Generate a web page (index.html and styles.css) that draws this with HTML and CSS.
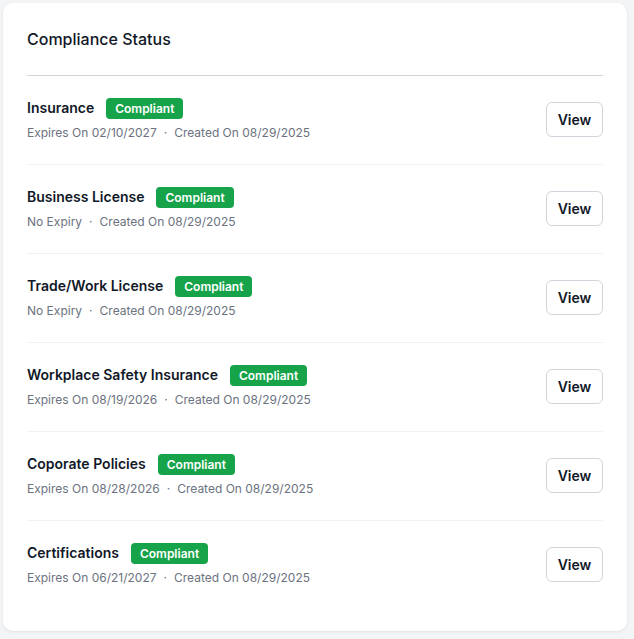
FILE: index.html
```html
<!DOCTYPE html>
<html lang="en">
<head>
    <meta charset="UTF-8">
    <title>Compliance Status</title>
    <link rel="stylesheet" href="styles.css">
</head>
<body>
    <section class="card">
        <h2 class="card-title">Compliance Status</h2>
        <div class="doc-list">
            <div class="doc-item">
                <div class="doc-info">
                    <p class="doc-name">Insurance <span class="badge">Compliant</span></p>
                    <p class="doc-meta">Expires On 02/10/2027<span class="dot">·</span>Created On 08/29/2025</p>
                </div>
                <button class="btn-view">View</button>
            </div>
            <div class="doc-item">
                <div class="doc-info">
                    <p class="doc-name">Business License <span class="badge">Compliant</span></p>
                    <p class="doc-meta">No Expiry<span class="dot">·</span>Created On 08/29/2025</p>
                </div>
                <button class="btn-view">View</button>
            </div>
            <div class="doc-item">
                <div class="doc-info">
                    <p class="doc-name">Trade/Work License <span class="badge">Compliant</span></p>
                    <p class="doc-meta">No Expiry<span class="dot">·</span>Created On 08/29/2025</p>
                </div>
                <button class="btn-view">View</button>
            </div>
            <div class="doc-item">
                <div class="doc-info">
                    <p class="doc-name">Workplace Safety Insurance <span class="badge">Compliant</span></p>
                    <p class="doc-meta">Expires On 08/19/2026<span class="dot">·</span>Created On 08/29/2025</p>
                </div>
                <button class="btn-view">View</button>
            </div>
            <div class="doc-item">
                <div class="doc-info">
                    <p class="doc-name">Coporate Policies <span class="badge">Compliant</span></p>
                    <p class="doc-meta">Expires On 08/28/2026<span class="dot">·</span>Created On 08/29/2025</p>
                </div>
                <button class="btn-view">View</button>
            </div>
            <div class="doc-item">
                <div class="doc-info">
                    <p class="doc-name">Certifications <span class="badge">Compliant</span></p>
                    <p class="doc-meta">Expires On 06/21/2027<span class="dot">·</span>Created On 08/29/2025</p>
                </div>
                <button class="btn-view">View</button>
            </div>
        </div>
    </section>
</body>
</html>
```
FILE: styles.css
```css
* {
    margin: 0;
    padding: 0;
    box-sizing: border-box;
}
body {
    padding: 3px;
    background-color: #f3f4f6;
    font-family: Inter, "Liberation Sans", sans-serif;
    color: #111827;
}
.card {
    width: 624px;
    padding: 24px 24px 22px;
    background-color: #fff;
    border-radius: 10px;
    box-shadow: 0 1px 3px rgba(0, 0, 0, 0.08);
}
.card-title {
    font-size: 16px;
    font-weight: 500;
    line-height: 24px;
    padding-bottom: 24px;
    border-bottom: 1px solid #d1d5db;
}
.doc-item {
    display: flex;
    align-items: center;
    justify-content: space-between;
    padding: 20px 0 21px;
    border-bottom: 1px solid #f0f1f3;
}
.doc-item:last-child {
    border-bottom: none;
}
.doc-name {
    display: flex;
    align-items: center;
    gap: 12px;
    font-size: 14px;
    font-weight: 600;
    line-height: 24px;
}
.badge {
    padding: 2px 9px;
    border-radius: 4px;
    background-color: #16a34a;
    color: #fff;
    font-size: 12px;
    font-weight: 600;
    line-height: 17px;
}
.doc-meta {
    margin-top: 3px;
    font-size: 12px;
    line-height: 20px;
    color: #6b7280;
}
.dot {
    margin: 0 7px;
}
.btn-view {
    width: 57px;
    height: 35px;
    border: 1px solid #d1d5db;
    border-radius: 6px;
    background-color: #fff;
    font-family: inherit;
    font-size: 14px;
    font-weight: 600;
    color: #111827;
}
```
